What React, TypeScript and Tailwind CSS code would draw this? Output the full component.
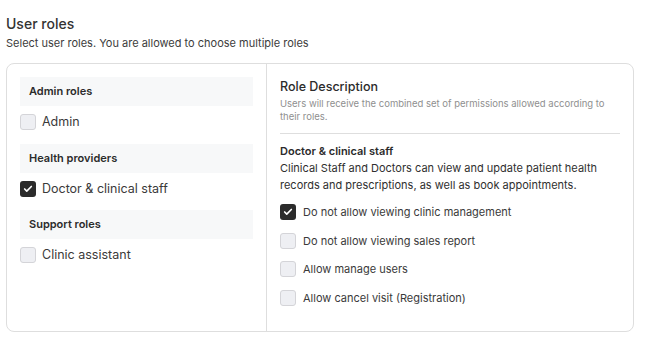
import { Check } from "lucide-react";

type Group = { title: string; items: { label: string; checked: boolean }[] };

const groups: Group[] = [
    { title: "Admin roles", items: [{ label: "Admin", checked: false }] },
    { title: "Health providers", items: [{ label: "Doctor & clinical staff", checked: true }] },
    { title: "Support roles", items: [{ label: "Clinic assistant", checked: false }] },
];

const permissions = [
    { label: "Do not allow viewing clinic management", checked: true },
    { label: "Do not allow viewing sales report", checked: false },
    { label: "Allow manage users", checked: false },
    { label: "Allow cancel visit (Registration)", checked: false },
];

function Box({ checked }: { checked: boolean }) {
    if (checked) {
        return (
            <span className="flex h-[16px] w-[16px] shrink-0 items-center justify-center rounded-[3px] bg-[#2b2b2b]">
                <Check className="h-[10px] w-[10px] text-white" strokeWidth={4} />
            </span>
        );
    }
    return <span className="h-[16px] w-[16px] shrink-0 rounded-[3px] border border-[#d4d4d8] bg-[#eeeff3]" />;
}

export default function App() {
    return (
        <div className="min-h-screen bg-white px-[6px] pt-[15px] font-['Inter',sans-serif] text-[#2f2f2f]">

            <h1 className="text-[14px] font-medium leading-[18px] text-[#333]">User roles</h1>
            <p className="mt-[3px] text-[11px] leading-[14px] text-[#3c3c3c]">
                Select user roles. You are allowed to choose multiple roles
            </p>

            <div className="mt-[13px] flex h-[269px] w-[628px] rounded-[8px] border border-[#dedede]">

                <div className="w-[262px] border-r border-[#dedede] px-[13px] pt-[13px]">
                    {groups.map((g) => (
                        <div key={g.title} className="mb-[13.5px]">
                            <div className="flex h-[29px] items-center bg-[#f7f8f9] px-[9px] text-[11px] font-semibold text-[#2b2b2b]">
                                {g.title}
                            </div>
                            {g.items.map((it) => (
                                <div key={it.label} className="mt-[8px] flex items-center gap-[6px]">
                                    <Box checked={it.checked} />
                                    <span className="text-[12.5px] leading-[16px] text-[#3a3a3a]">{it.label}</span>
                                </div>
                            ))}
                        </div>
                    ))}
                </div>

                <div className="flex-1 px-[13px] pt-[15px]">
                    <h2 className="text-[12.5px] font-medium leading-[16px] text-[#2b2b2b]">Role Description</h2>
                    <p className="mt-[2px] w-[340px] text-[9.5px] leading-[13px] text-[#8f8f8f]">
                        Users will receive the combined set of permissions allowed according to their roles.
                    </p>
                    <div className="mt-[10px] h-px w-[340px] bg-[#dedede]" />

                    <h3 className="mt-[10px] text-[11px] font-semibold leading-[14px] text-[#2b2b2b]">
                        Doctor &amp; clinical staff
                    </h3>
                    <p className="mt-[2px] w-[340px] text-[11px] leading-[16.5px] text-[#2f2f2f]">
                        Clinical Staff and Doctors can view and update patient health records and prescriptions, as well as book appointments.
                    </p>

                    <div className="mt-[11px] flex flex-col gap-[12.5px]">
                        {permissions.map((p) => (
                            <div key={p.label} className="flex items-center gap-[7px]">
                                <Box checked={p.checked} />
                                <span className="text-[11px] leading-[16px] text-[#3a3a3a]">{p.label}</span>
                            </div>
                        ))}
                    </div>
                </div>

            </div>

        </div>
    );
}
